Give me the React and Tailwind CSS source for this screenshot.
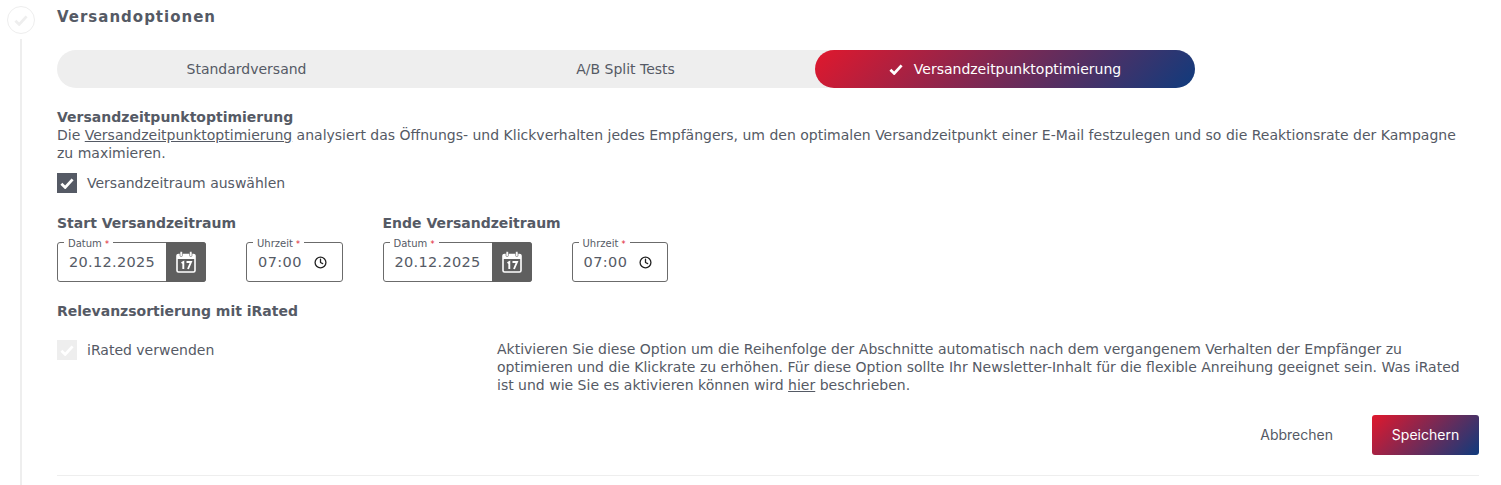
import { Clock } from 'lucide-react'

function CheckMark({ className }) {
  return (
    <svg width="14" height="11" viewBox="0 0 14 11" className={className}>
      <path d="M1.4 5.8l3.8 3.6 7.4-8" fill="none" stroke="currentColor" strokeWidth="2.8" />
    </svg>
  )
}

function CalendarIcon() {
  return (
    <svg width="20" height="22" viewBox="0 0 20 22" fill="none">
      <rect x="1" y="3.5" width="18" height="17.5" rx="1.5" stroke="#fff" strokeWidth="1.6" />
      <path d="M1 5a1.5 1.5 0 0 1 1.5-1.5h15A1.5 1.5 0 0 1 19 5v3H1z" fill="#fff" />
      <rect x="4" y="0.5" width="2.4" height="5" rx="1" fill="#fff" stroke="#5f5f5f" strokeWidth="0.6" />
      <rect x="13.6" y="0.5" width="2.4" height="5" rx="1" fill="#fff" stroke="#5f5f5f" strokeWidth="0.6" />
      <path d="M5.5 12l1.8-1v7M10.5 11h4.5l-3 7" stroke="#fff" strokeWidth="1.9" />
    </svg>
  )
}

function Legend({ label }) {
  return (
    <span className="absolute left-[6px] top-[-5px] bg-white px-1 text-[10px] leading-[12px] text-[#555a65]">
      {label} <span className="text-[8px] text-[#e0182d]">*</span>
    </span>
  )
}

function DateTime({ date, time }) {
  return (
    <div className="flex gap-10 mt-[10px]">
      <div className="relative flex w-[149px] h-10 border border-[#6b6b6b] rounded-[3px]">
        <Legend label="Datum" />
        <div className="flex-1 flex items-center pl-[11px] text-[14.5px] tracking-[0.3px] text-[#555a65]">{date}</div>
        <div className="w-10 -my-px -mr-px flex items-center justify-center bg-[#5f5f5f] rounded-r-[3px]">
          <CalendarIcon />
        </div>
      </div>
      <div className="relative flex items-center w-[96.5px] h-10 border border-[#6b6b6b] rounded-[3px] pl-[11px]">
        <Legend label="Uhrzeit" />
        <span className="text-[14.5px] tracking-[0.4px] text-[#555a65]">{time}</span>
        <Clock size={13} strokeWidth={2.4} className="ml-3 text-[#222]" />
      </div>
    </div>
  )
}

export default function App() {
  return (
    <div className="h-[485px] w-[1501px] overflow-hidden bg-white flex font-['DejaVu_Sans',sans-serif] text-sm text-[#555a65]">
      {/* Step rail */}
      <div className="w-[57px] shrink-0 flex flex-col pl-[7px] pt-[6px]">
        <div className="w-7 h-7 rounded-full border border-[#eeeeee] flex items-center justify-center">
          <CheckMark className="text-[#eeeeee]" />
        </div>
        <div className="w-0.5 flex-1 mt-[5px] ml-[13px] bg-[#eeeeee]" />
      </div>

      <div className="w-[1422px]">
        <h2 className="mt-2 h-[18px] leading-[18px] text-[15px] font-bold tracking-[1px] text-[#555a65]">Versandoptionen</h2>

        {/* Tabs */}
        <div className="mt-6 flex w-[1138px] h-[38px] rounded-full bg-[#eeeeee]">
          <div className="flex-1 flex items-center justify-center">Standardversand</div>
          <div className="flex-1 flex items-center justify-center">A/B Split Tests</div>
          <div className="w-[380px] flex items-center justify-center gap-[11px] rounded-full bg-[linear-gradient(135deg,#e0182d,#0f3b7d)] text-white">
            <CheckMark />
            Versandzeitpunktoptimierung
          </div>
        </div>

        <h3 className="mt-5 font-bold leading-[18px]">Versandzeitpunktoptimierung</h3>
        <p className="leading-[18px] pr-[15px]">
          Die <span className="underline">Versandzeitpunktoptimierung</span> analysiert das Öffnungs- und Klickverhalten jedes Empfängers, um den optimalen Versandzeitpunkt einer E-Mail festzulegen und so die Reaktionsrate der Kampagne zu maximieren.
        </p>

        <label className="mt-[11px] flex items-center gap-[10px] h-5">
          <span className="w-5 h-5 bg-[#555a65] flex items-center justify-center text-white">
            <CheckMark />
          </span>
          Versandzeitraum auswählen
        </label>

        <div className="mt-[21px] flex gap-10">
          <div>
            <div className="font-bold leading-[18px]">Start Versandzeitraum</div>
            <DateTime date="20.12.2025" time="07:00" />
          </div>
          <div>
            <div className="font-bold leading-[18px]">Ende Versandzeitraum</div>
            <DateTime date="20.12.2025" time="07:00" />
          </div>
        </div>

        <div className="mt-5 font-bold leading-[18px]">Relevanzsortierung mit iRated</div>

        <div className="mt-5 flex">
          <label className="w-[440px] flex items-center gap-[10px] h-5 self-start">
            <span className="w-5 h-5 bg-[#eeeeee] flex items-center justify-center text-white">
              <CheckMark />
            </span>
            iRated verwenden
          </label>
          <p className="flex-1 leading-[18px]">
            Aktivieren Sie diese Option um die Reihenfolge der Abschnitte automatisch nach dem vergangenem Verhalten der Empfänger zu optimieren und die Klickrate zu erhöhen. Für diese Option sollte Ihr Newsletter-Inhalt für die flexible Anreihung geeignet sein. Was iRated ist und wie Sie es aktivieren können wird <span className="underline">hier</span> beschrieben.
          </p>
        </div>

        <div className="mt-[21px] flex justify-end items-center gap-[39px] font-['Inter',sans-serif] text-sm">
          <span>Abbrechen</span>
          <button className="w-[107px] h-10 rounded-[3px] bg-[linear-gradient(135deg,#e0182d,#0f3b7d)] text-white">Speichern</button>
        </div>
        <div className="mt-5 h-px bg-[#eeeeee]" />
      </div>
    </div>
  )
}
